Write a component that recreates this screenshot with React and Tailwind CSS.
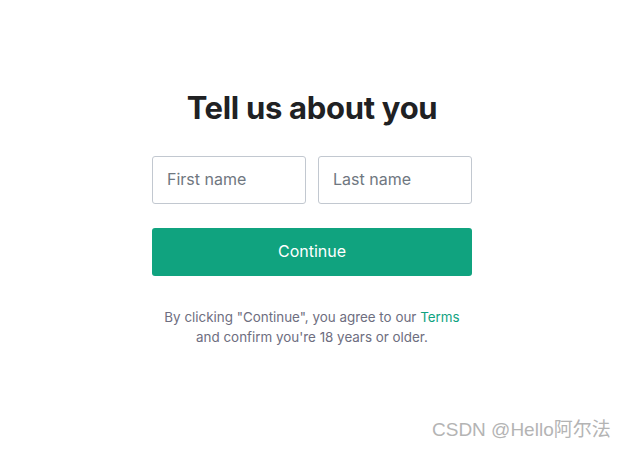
import React from "react";

const App = () => {
  return (
    <div className="relative w-[624px] h-[449px] bg-white font-['Inter',sans-serif] overflow-hidden">
      <div className="flex flex-col items-center pt-[88px]">
        <h1 className="text-[31px] leading-[40px] font-bold text-[#202123] tracking-[-0.3px]">
          Tell us about you
        </h1>

        <div className="w-[320px] mt-[28px]">
          <div className="flex gap-3">
            <input
              type="text"
              placeholder="First name"
              className="w-[154px] h-[48px] rounded-[3px] border border-[#c2c8d0] px-[14px] pb-[2px] text-[16px] text-[#2d333a] placeholder:text-[#6f7780] outline-none"
            />
            <input
              type="text"
              placeholder="Last name"
              className="w-[154px] h-[48px] rounded-[3px] border border-[#c2c8d0] px-[14px] pb-[2px] text-[16px] text-[#2d333a] placeholder:text-[#6f7780] outline-none"
            />
          </div>

          <button className="mt-6 w-full h-[48px] pb-[2px] rounded-[3px] bg-[#10a37f] text-white text-[16px]">
            Continue
          </button>

          <p className="mt-[31px] text-center text-[13.4px] leading-[20px] text-[#6e6e80]">
            By clicking "Continue", you agree to our <span className="text-[#10a37f]">Terms</span>
            <br />
            and confirm you're 18 years or older.
          </p>
        </div>
      </div>

      {/* watermark */}
      <div className="absolute left-[432px] top-[418px] text-[19px] leading-[24px] text-[#b4b4b4] font-['Liberation_Sans','Noto_Sans_CJK_SC',sans-serif]">
        CSDN @Hello阿尔法
      </div>
    </div>
  );
};

export default App;
